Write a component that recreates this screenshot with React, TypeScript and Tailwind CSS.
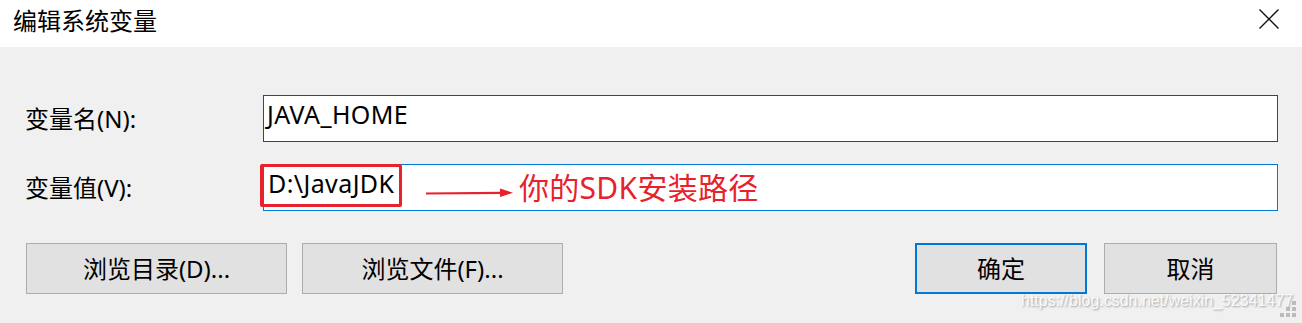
import React from 'react';

const FONT = { fontFamily: '"Noto Sans", "Noto Sans CJK SC", sans-serif' };

const CloseIcon = () => (
  <svg width="22" height="22" viewBox="0 0 22 22" className="block">
    <path d="M1.5 1.5 L20.5 20.5 M20.5 1.5 L1.5 20.5" stroke="#111" strokeWidth="1.4" fill="none" />
  </svg>
);

const Grip = () => (
  <svg width="18" height="18" viewBox="0 0 18 18" className="block">
    {[
      [12, 0],
      [6, 6],
      [12, 6],
      [0, 12],
      [6, 12],
      [12, 12],
    ].map(([x, y], i) => (
      <rect key={i} x={x} y={y} width="4" height="4" fill="#bcbcbc" />
    ))}
  </svg>
);

const Button = ({ children, width, primary }: { children: React.ReactNode; width: string; primary?: boolean }) => (
  <button
    className={`${width} h-[51px] flex items-center justify-center bg-[#e1e1e1] text-[24px] text-black ${
      primary ? 'border-2 border-[#0078d7]' : 'border border-[#adadad]'
    }`}
  >
    {children}
  </button>
);

export default function App() {
  return (
    <div className="relative w-[1302px] h-[323px] overflow-hidden bg-[#f0f0f0] select-none" style={FONT}>
      {/* Title bar */}
      <div className="h-[47px] bg-white flex items-center justify-between pl-[13px] pr-[22px]">
        <span className="text-[24px] leading-none text-black pb-[6px]">编辑系统变量</span>
        <div className="pb-[10px]">
          <CloseIcon />
        </div>
      </div>

      {/* Body */}
      <div className="pt-[48px] pl-[25px] pr-[24px]">
        <div className="flex items-center">
          <div className="w-[238px] text-[24px] text-black leading-none">变量名(N):</div>
          <div className="flex-1 h-[47px] bg-white border border-[#444] px-[3px] pt-[3px] text-[25px] tracking-[0.4px] leading-[30px] text-black">
            JAVA_HOME
          </div>
        </div>

        <div className="flex items-center mt-[22px]">
          <div className="w-[238px] text-[24px] text-black leading-none">变量值(V):</div>
          <div className="relative flex-1 h-[47px] bg-white border border-[#0078d7] px-[4px] pt-[3px] text-[25px] tracking-[0.4px] leading-[30px] text-black">
            D:\JavaJDK
            {/* annotation */}
            <div className="absolute left-[-4px] top-[-1px] w-[142px] h-[43px] border-[3px] border-[#e8222c] rounded-[2px]" />
            <svg className="absolute left-[162px] top-[22px]" width="90" height="12" viewBox="0 0 90 12">
              <path d="M0 6.5 L76 5.8" stroke="#e8222c" strokeWidth="2.2" fill="none" />
              <path d="M74 1.5 L87 5.8 L74 10 Z" fill="#e8222c" />
            </svg>
            <span className="absolute left-[255px] top-[5px] text-[30px] tracking-[0.3px] leading-[36px] text-[#e8222c]">
              你的SDK安装路径
            </span>
          </div>
        </div>

        <div className="flex items-center mt-[32px] pl-[1px]">
          <Button width="w-[261px]">浏览目录(D)...</Button>
          <div className="ml-[15px]">
            <Button width="w-[261px]">浏览文件(F)...</Button>
          </div>
          <div className="ml-auto flex gap-[17px] pr-[1px]">
            <Button width="w-[172px]" primary>
              确定
            </Button>
            <Button width="w-[173px]">取消</Button>
          </div>
        </div>
      </div>

      {/* resize grip */}
      <div className="absolute right-[4px] bottom-[4px]">
        <Grip />
      </div>

      {/* watermark */}
      <div
        className="absolute left-[1021px] top-[291px] text-[16px] leading-[20px] text-white/90 [text-shadow:1px_1px_2px_rgba(0,0,0,0.35)] whitespace-nowrap"
        style={{ fontFamily: '"Liberation Sans", Arial, sans-serif' }}
      >
        https://blog.csdn.net/weixin_52341477
      </div>
    </div>
  );
}
